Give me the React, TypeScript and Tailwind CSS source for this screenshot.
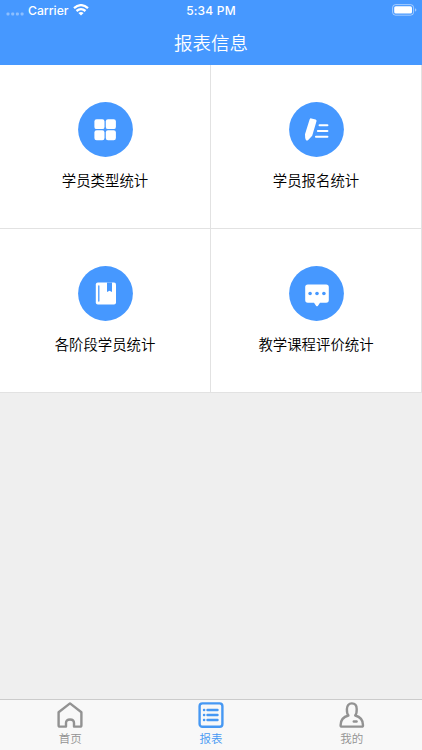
import type { ReactNode } from 'react'

type ReportCardProps = {
  label: string
  icon: ReactNode
}

function ReportCard({ label, icon }: ReportCardProps) {
  return (
    <button
      type="button"
      className="flex flex-col items-center border-r border-b border-[#e2e2e2] bg-white pt-[37px]"
    >
      <svg viewBox="0 0 55 55" className="h-[55px] w-[55px]">
        <circle cx="27.5" cy="27.5" r="27.4" fill="#4698ff" />
        {icon}
      </svg>
      <span className="mt-[11.5px] text-[14.4px] leading-[22px] font-[350] whitespace-nowrap text-black">{label}</span>
    </button>
  )
}

type TabItemProps = {
  label: string
  active?: boolean
  children: ReactNode
}

function TabItem({ label, active = false, children }: TabItemProps) {
  return (
    <button
      type="button"
      className={`flex flex-1 flex-col items-center pt-px ${active ? 'text-[#4698f3]' : 'text-[#929292]'}`}
    >
      <svg
        viewBox="0 0 28 28"
        className="h-7 w-7"
        fill="none"
        stroke="currentColor"
        strokeWidth="2.4"
        strokeLinecap="round"
        strokeLinejoin="round"
      >
        {children}
      </svg>
      <span className="text-[11.5px] leading-[18px] font-[350]">{label}</span>
    </button>
  )
}

const gridIcon = (
  <g fill="white">
    <rect x="16.4" y="17.2" width="10.1" height="9.9" rx="2.2" />
    <rect x="27.8" y="17.2" width="10.1" height="9.9" rx="2.2" />
    <rect x="16.4" y="28.3" width="10.1" height="9.9" rx="2.2" />
    <rect x="27.8" y="28.3" width="10.1" height="9.9" rx="2.2" />
  </g>
)

const pencilIcon = (
  <g>
    <path
      d="M22.4 16.4 26.6 17.5Q27.9 18 27.5 19.2L23.2 33.8 19.2 38Q17.9 39 16.9 38 15.9 36.5 16 32.2L20.6 17.4Q21.2 16.1 22.4 16.4Z"
      fill="white"
    />
    <path d="M30.6 23.2H38.4M28.9 29H38.4M27 34.8H38.4" stroke="white" strokeWidth="2.1" strokeLinecap="round" />
  </g>
)

const bookIcon = (
  <g>
    <rect x="17.8" y="16.6" width="20.2" height="22" rx="2" fill="white" />
    <path d="M20.8 20V35" stroke="#4698ff" strokeWidth="1.3" strokeLinecap="round" />
    <path d="M29 16.5H34V26.1L31.5 24.7 29 26.1Z" fill="#4698ff" />
  </g>
)

const commentIcon = (
  <g>
    <path
      d="M18.8 18.5H37.2Q39.8 18.5 39.8 21.1V34.1Q39.8 36.7 37.2 36.7H31L28.8 39.9Q28 40.8 27.2 39.9L25 36.7H18.8Q16.2 36.7 16.2 34.1V21.1Q16.2 18.5 18.8 18.5Z"
      fill="white"
    />
    <g fill="#4698ff">
      <circle cx="21.1" cy="27.5" r="1.8" />
      <circle cx="28" cy="27.5" r="1.8" />
      <circle cx="34.9" cy="27.5" r="1.8" />
    </g>
  </g>
)

function StatusBar() {
  return (
    <div className="grid h-[21px] grid-cols-3 items-center px-[6px] font-[Inter,sans-serif] text-[12px] leading-5 font-medium text-white">
      <div className="flex items-center">
        <svg viewBox="0 0 18 4" className="mt-[7px] h-1 w-[18px]" fill="white" opacity="0.38">
          <rect x="0.5" y="0.5" width="3" height="3" rx="1" />
          <rect x="5.2" y="0.5" width="3" height="3" rx="1" />
          <rect x="9.9" y="0.5" width="3" height="3" rx="1" />
          <rect x="14.6" y="0.5" width="3" height="3" rx="1" />
        </svg>
        <span className="ml-1 text-[12.2px]">Carrier</span>
        <svg viewBox="0 0 16 12" className="-mt-px ml-1 h-3 w-4" fill="none" stroke="white" strokeWidth="2.3">
          <path d="M1 4.2Q8-1.9 15 4.2M3.5 7Q8 3.2 12.5 7" />
          <path d="M8 11.4 5.4 8.9Q8 6.9 10.6 8.9Z" fill="white" stroke="none" />
        </svg>
      </div>
      <span className="text-center tracking-[0.2px]">5:34 PM</span>
      <svg viewBox="0 0 25 12" className="-mt-px -mr-[1px] h-3 w-[25px] justify-self-end">
        <rect x="0.6" y="0.6" width="21" height="10.6" rx="3" fill="none" stroke="white" strokeOpacity="0.5" />
        <rect x="2.2" y="2.2" width="17.8" height="7.4" rx="1.6" fill="white" />
        <path d="M23 4.3Q24.4 4.8 24.4 5.9T23 7.6Z" fill="white" fillOpacity="0.5" />
      </svg>
    </div>
  )
}

export default function App() {
  return (
    <div className="flex h-[750px] w-[422px] flex-col overflow-hidden bg-[#efefef] font-['Noto_Sans_CJK_SC',sans-serif]">
      <header className="h-[65.4px] shrink-0 bg-[#4698ff]">
        <StatusBar />
        <h1 className="text-center text-[18.5px] leading-[43px] font-[350] text-white">报表信息</h1>
      </header>

      <main className="flex-1">
        <div className="grid auto-rows-[164px] grid-cols-2">
          <ReportCard label="学员类型统计" icon={gridIcon} />
          <ReportCard label="学员报名统计" icon={pencilIcon} />
          <ReportCard label="各阶段学员统计" icon={bookIcon} />
          <ReportCard label="教学课程评价统计" icon={commentIcon} />
        </div>
      </main>

      <nav className="flex h-[51px] shrink-0 border-t border-[#cbcbcb] bg-[#f8f8f8]">
        <TabItem label="首页">
          <path d="M2.6 11.2 14 2.4 25.4 11.2V24.2Q25.4 25.6 24 25.6H18V22Q18 18.5 14 18.5T10 22V25.6H4Q2.6 25.6 2.6 24.2Z" />
        </TabItem>
        <TabItem label="报表" active>
          <rect x="2.6" y="2.4" width="22.8" height="23.4" rx="2.8" />
          <path d="M10.5 9H20.5M10.5 14H20.5M10.5 19H20.5" />
          <path d="M7 9H7.2M7 14H7.2M7 19H7.2" />
        </TabItem>
        <TabItem label="我的">
          <path d="M10.4 14.5C8.8 13 8.9 10.5 8.9 8C8.9 4.6 10.8 2.4 13.8 2.4S18.7 4.6 18.7 8C18.7 10.5 18.8 13 17.2 14.5C22.4 15.8 25 19.4 25 24.2Q25 25.6 23.6 25.6H4Q2.6 25.6 2.6 24.2C2.6 19.4 5.2 15.8 10.4 14.5Z" />
          <path d="M15.8 20.5H18.6" />
        </TabItem>
      </nav>
    </div>
  )
}
